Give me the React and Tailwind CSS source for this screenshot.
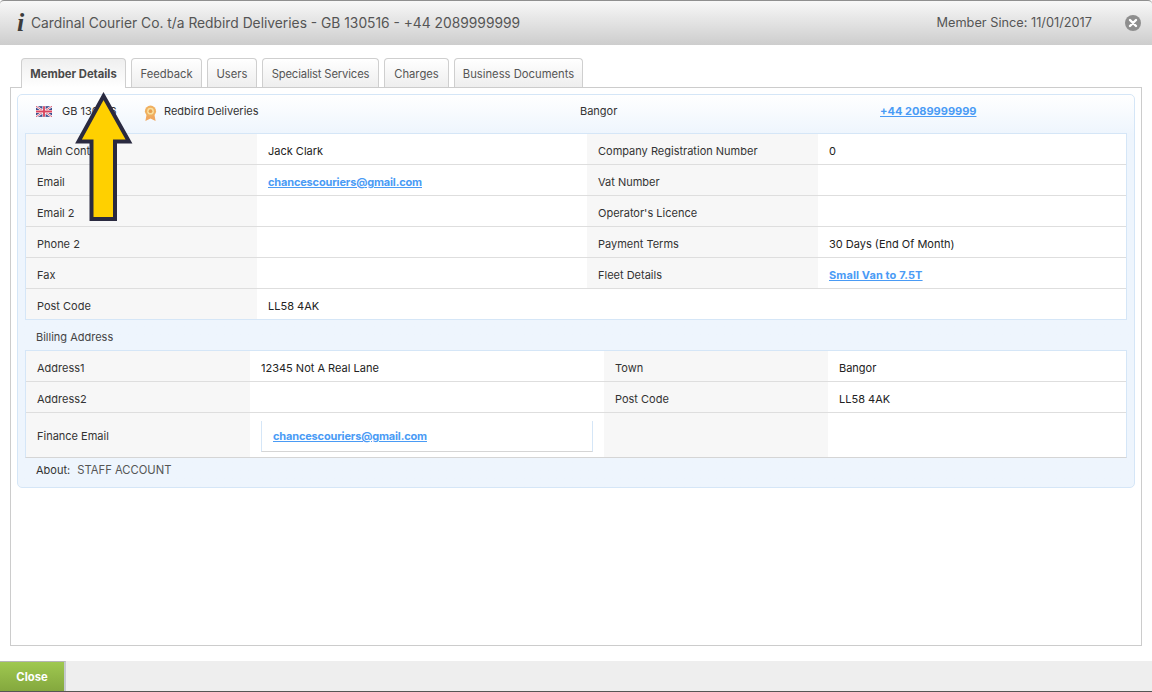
function Link({ children, t = "" }) {
  return <a className={`font-bold text-[#4a9bf5] underline ${t}`}>{children}</a>;
}

function Top({ a, b, c, d }) {
  return (
    <div className="flex h-[31px] border-b border-[#dedede]">
      <div className="w-[231px] shrink-0 bg-[#f7f7f7] pl-[11px] pt-[4px] flex items-center text-[#333]">{a}</div>
      <div className="w-[330px] shrink-0 pl-[11px] pt-[4px] flex items-center text-[#222]">{b}</div>
      <div className="w-[231px] shrink-0 bg-[#f7f7f7] pl-[11px] pt-[4px] flex items-center text-[#333]">{c}</div>
      <div className="flex-1 pl-[11px] pt-[4px] flex items-center text-[#222]">{d}</div>
    </div>
  );
}

function Bill({ a, b, c, d, tall }) {
  return (
    <div className={`flex ${tall ? "h-[44px]" : "h-[31px] border-b border-[#dedede]"}`}>
      <div className={`w-[224px] shrink-0 bg-[#f7f7f7] pl-[11px] ${tall ? "pt-[2px]" : "pt-[4px]"} flex items-center text-[#333]`}>{a}</div>
      <div className={`w-[354px] shrink-0 pl-[11px] ${tall ? "pt-[2px]" : "pt-[4px]"} flex items-center text-[#222]`}>{b}</div>
      <div className="w-[224px] shrink-0 bg-[#f7f7f7] pl-[11px] pt-[4px] flex items-center text-[#333]">{c}</div>
      <div className="flex-1 pl-[11px] pt-[4px] flex items-center text-[#222]">{d}</div>
    </div>
  );
}

function Tab({ children, active, w }) {
  return active ? (
    <div className={`relative z-10 h-[30px] -mb-px ${w} pt-[2px] flex items-center justify-center rounded-t-[4px] border border-b-0 border-[#cfcfcf] bg-gradient-to-b from-[#efefef] to-white font-bold text-[#4a4a4a] text-[11.25px]`}>
      {children}
    </div>
  ) : (
    <div className={`h-[29px] ${w} pt-[2px] flex items-center justify-center rounded-t-[4px] border border-b-0 border-[#cfcfcf] bg-gradient-to-b from-white to-[#eeeeee] text-[#555] text-[11.25px]`}>
      {children}
    </div>
  );
}

export default function App() {
  return (
    <div className="relative w-[1152px] h-[692px] overflow-hidden bg-white flex flex-col font-['Inter','Lato',sans-serif] text-[11px] text-[#333]">
      <header className="h-[45px] shrink-0 border-t border-[#8f8f8f] rounded-t-[4px] bg-gradient-to-b from-[#f8f8f8] to-[#cdcdcd] flex items-center pl-[17px] pr-[11px]">
        <span className="font-['Liberation_Serif',serif] italic font-bold text-[26px] leading-none text-[#3c3c3c] w-[14px]">i</span>
        <span className="text-[13.8px] text-[#555]">Cardinal Courier Co. t/a Redbird Deliveries - GB 130516 - +44 2089999999</span>
        <span className="ml-auto text-[12.75px] text-[#555]">Member Since: 11/01/2017</span>
        <svg viewBox="0 0 16 16" className="w-[16px] h-[16px] ml-[33px]">
          <circle cx="8" cy="8" r="8" fill="#8e8e8e" />
          <path d="M5 5l6 6M11 5l-6 6" stroke="#fff" strokeWidth="2.4" strokeLinecap="round" />
        </svg>
      </header>

      <main className="flex-1 px-[10px] pt-[13px] flex flex-col">
        <div className="flex items-end gap-[5px] pl-[11px] h-[29px]">
          <Tab active w="w-[105px]">Member Details</Tab>
          <Tab w="w-[71px]">Feedback</Tab>
          <Tab w="w-[50px]">Users</Tab>
          <Tab w="w-[117px] tracking-[-0.15px]">Specialist Services</Tab>
          <Tab w="w-[65px]">Charges</Tab>
          <Tab w="w-[129px]">Business Documents</Tab>
        </div>
        <div className="h-[559px] border border-[#cccccc] p-[6px]">
          <div className="h-[394px] rounded-[5px] border border-[#d5e6f7] bg-gradient-to-b from-white from-0% to-[#eef5fd] to-[10%] px-[7px] flex flex-col">
            <div className="h-[38px] shrink-0 pb-[5px] flex items-center text-[#333]">
              <svg viewBox="0 0 60 40" className="w-[16px] h-[11px] ml-[11px]">
                <rect width="60" height="40" fill="#3f4f8f" />
                <path d="M0 0L60 40M60 0L0 40" stroke="#fff" strokeWidth="8" />
                <path d="M0 0L60 40M60 0L0 40" stroke="#d9455f" strokeWidth="3" />
                <path d="M30 0V40M0 20H60" stroke="#fff" strokeWidth="12" />
                <path d="M30 0V40M0 20H60" stroke="#d9455f" strokeWidth="7" />
              </svg>
              <span className="ml-[10px] w-[82px]">GB 130516</span>
              <svg viewBox="0 0 14 18" className="w-[13px] h-[17px] mt-[4px]">
                <path d="M3 9L1.5 17L7 14.5L12.5 17L11 9Z" fill="#f0a860" />
                <circle cx="7" cy="6.5" r="6" fill="#f0b060" />
                <circle cx="7" cy="6.5" r="3.6" fill="#f8e0a0" />
                <circle cx="7" cy="6.5" r="2" fill="#e8a050" />
              </svg>
              <span className="ml-[7px] w-[416px]">Redbird Deliveries</span>
              <span className="w-[300px]">Bangor</span>
              <Link>+44 2089999999</Link>
            </div>

            <div className="border border-[#d5e6f7] bg-white">
              <Top a="Main Contact" b="Jack Clark" c="Company Registration Number" d="0" />
              <Top a="Email" b={<Link t="tracking-[-0.16px]">chancescouriers@gmail.com</Link>} c="Vat Number" />
              <Top a="Email 2" c="Operator's Licence" />
              <Top a="Phone 2" c="Payment Terms" d="30 Days (End Of Month)" />
              <Top a="Fax" c="Fleet Details" d={<Link t="tracking-[0.1px]">Small Van to 7.5T</Link>} />
              <div className="flex h-[30px]">
                <div className="w-[231px] shrink-0 bg-[#f7f7f7] pl-[11px] pt-[4px] flex items-center text-[#333]">Post Code</div>
                <div className="pl-[11px] pt-[4px] flex items-center text-[#222]">LL58 4AK</div>
              </div>
            </div>

            <div className="h-[30px] shrink-0 pt-[4px] flex items-center pl-[11px] text-[#444]">Billing Address</div>

            <div className="border border-[#d5e6f7] border-b-[#d5d5d5] bg-white">
              <Bill a="Address1" b="12345 Not A Real Lane" c="Town" d="Bangor" />
              <Bill a="Address2" c="Post Code" d="LL58 4AK" />
              <Bill
                tall
                a="Finance Email"
                b={
                  <div className="w-[332px] h-[31px] border-x border-b border-[#d5e6f7] border-b-[#d5d5d5] pl-[11px] pt-[2px] flex items-center">
                    <Link t="tracking-[-0.16px]">chancescouriers@gmail.com</Link>
                  </div>
                }
              />
            </div>

            <div className="h-[27px] shrink-0 pb-[2px] flex items-center pl-[11px] gap-[7px]">
              <span className="text-[#333]">About:</span>
              <span className="text-[#555] text-[11.25px]">STAFF ACCOUNT</span>
            </div>
          </div>
        </div>
      </main>

      <footer className="h-[31px] shrink-0 bg-[#eeeeee] border-b border-[#555] flex">
        <button className="w-[66px] pt-[1px] border-r-2 border-[#c5c9cf] border-t border-t-[#b5b5b5] bg-gradient-to-b from-[#9fc850] to-[#84a83e] text-white font-bold text-[11.25px]">Close</button>
      </footer>

      <svg viewBox="0 0 1152 692" className="absolute left-0 top-0 w-[1152px] h-[692px] pointer-events-none">
        <path d="M103.5 96L129 141.5H115V219H91.5V141.5H78.5Z" fill="#ffd000" stroke="#2a2a40" strokeWidth="4" strokeLinejoin="miter" />
      </svg>
    </div>
  );
}
